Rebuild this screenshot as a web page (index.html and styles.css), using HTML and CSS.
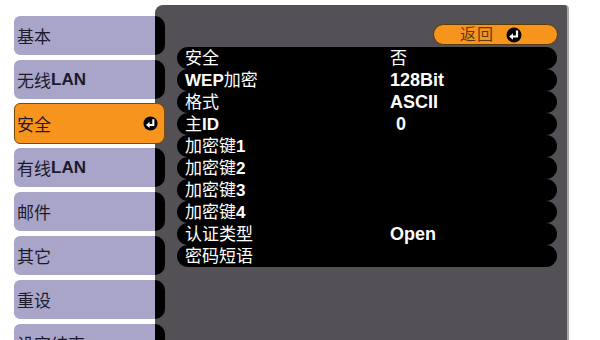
FILE: index.html
```html
<!DOCTYPE html>
<html lang="zh">
<head>
<meta charset="utf-8">
<title>安全</title>
<link rel="stylesheet" href="styles.css">
</head>
<body>
<div class="screen">
  <nav class="tabs">
    <div class="tab">基本</div>
    <div class="tab">无线<b>LAN</b></div>
    <div class="tab active">安全
      <svg class="enter" viewBox="0 0 16 16" width="15" height="15"><circle cx="8" cy="8" r="7.5" fill="#000"/><path d="M11 3.5V9.5H6.5" fill="none" stroke="#fff" stroke-width="2.2"/><path d="M3.2 9.5L7 6.2V12.8Z" fill="#fff"/></svg>
    </div>
    <div class="tab">有线<b>LAN</b></div>
    <div class="tab">邮件</div>
    <div class="tab">其它</div>
    <div class="tab">重设</div>
    <div class="tab">设定结束</div>
  </nav>
  <main class="panel">
    <div class="toolbar">
      <div class="back">
        <span class="back-label">返回</span>
        <svg class="enter" viewBox="0 0 16 16" width="16" height="16"><circle cx="8" cy="8" r="7.5" fill="#000"/><path d="M11 3.5V9.5H6.5" fill="none" stroke="#fff" stroke-width="2.2"/><path d="M3.2 9.5L7 6.2V12.8Z" fill="#fff"/></svg>
      </div>
    </div>
    <div class="rows">
      <div class="row"><span class="label">安全</span><span class="value">否</span></div>
      <div class="row"><span class="label"><b>WEP</b>加密</span><span class="value"><b>128Bit</b></span></div>
      <div class="row"><span class="label">格式</span><span class="value"><b>ASCII</b></span></div>
      <div class="row"><span class="label">主<b>ID</b></span><span class="value indent"><b>0</b></span></div>
      <div class="row"><span class="label">加密键<b>1</b></span><span class="value"></span></div>
      <div class="row"><span class="label">加密键<b>2</b></span><span class="value"></span></div>
      <div class="row"><span class="label">加密键<b>3</b></span><span class="value"></span></div>
      <div class="row"><span class="label">加密键<b>4</b></span><span class="value"></span></div>
      <div class="row"><span class="label">认证类型</span><span class="value"><b>Open</b></span></div>
      <div class="row"><span class="label">密码短语</span><span class="value"></span></div>
    </div>
  </main>
</div>
</body>
</html>
```
FILE: styles.css
```css
* { box-sizing: border-box; }
html, body {
  margin: 0;
  padding: 0;
  background: #fff;
  width: 600px;
  height: 340px;
  overflow: hidden;
}
body {
  font-family: "Liberation Sans", "Noto Sans CJK SC", sans-serif;
  font-size: 17px;
}
b { font-weight: bold; }
.value b { font-size: 18px; }
.screen {
  display: flex;
  align-items: flex-start;
  padding-left: 14px;
  height: 340px;
}
.tabs {
  position: relative;
  z-index: 1;
  width: 151px;
  flex: none;
  padding-top: 16px;
  display: flex;
  flex-direction: column;
  gap: 5px;
}
.tab {
  height: 39px;
  display: flex;
  align-items: center;
  padding-left: 3px;
  color: #1c1a2c;
  background: linear-gradient(to right, #a9a5c9 calc(100% - 10px), #000 0);
  border-radius: 6px 10px 10px 6px;
  flex: none;
}
.tab.active {
  background: #f7941e;
  border: 1px solid #7a4a08;
  padding-left: 2px;
  justify-content: space-between;
  padding-right: 6px;
  border-radius: 6px 8px 8px 6px;
  height: 41px;
  margin: -1px 0;
}
.enter { display: block; flex: none; }
.panel {
  margin-left: -10px;
  margin-top: 5px;
  width: 414px;
  height: 335px;
  background: #545156;
  border-right: 2px solid #a9a7aa;
  border-radius: 8px 4px 0 0;
  padding: 19px 9px 0 22px;
  flex: none;
}
.toolbar {
  display: flex;
  justify-content: flex-end;
  height: 23px;
}
.back {
  width: 125px;
  height: 21px;
  background: #f7941e;
  border: 1px solid #5a3a04;
  border-radius: 11px;
  display: flex;
  align-items: center;
  padding-left: 26px;
  gap: 12px;
}
.back-label {
  color: #5c3a10;
  font-size: 16px;
  line-height: 1;
  letter-spacing: 1px;
}
.rows {
  display: flex;
  flex-direction: column;
  width: 380px;
}
.row {
  height: 22px;
  background: #000;
  border-radius: 11px;
  color: #fff;
  display: grid;
  grid-template-columns: 205px 1fr;
  align-items: center;
  padding-left: 8px;
  line-height: 1;
}
.value.indent { padding-left: 6px; }
```
